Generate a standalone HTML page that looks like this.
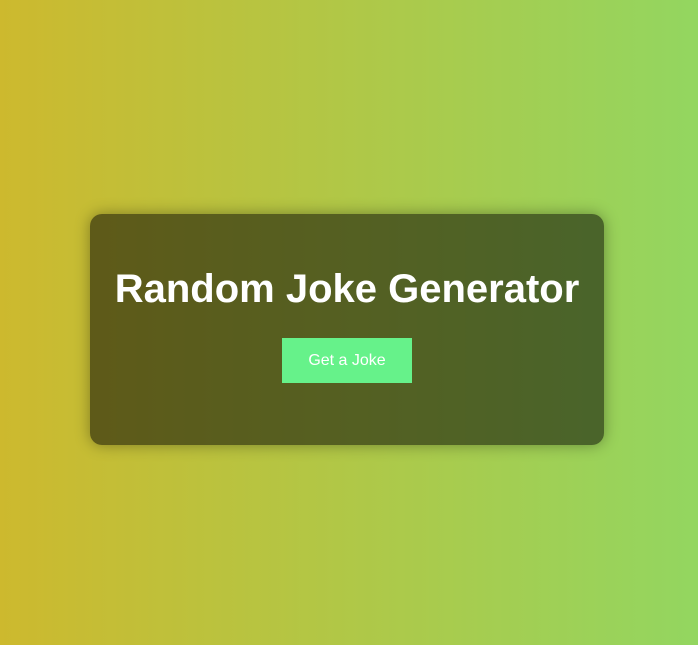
<!DOCTYPE html>
<html><head><style>
html,body{margin:0;height:100%;}
body{width:698px;height:645px;background:linear-gradient(to right,#cdb92e,#93d660);font-family:"Liberation Sans",Arial,sans-serif;position:relative;overflow:hidden;}
.card{position:absolute;left:90px;top:214px;width:514px;height:231px;background:rgba(0,0,0,0.52);border-radius:12px;box-shadow:0 0 15px rgba(0,0,0,0.35);text-align:center;}
h1{margin:0;position:absolute;top:52px;left:0;right:0;color:#fff;font-size:40px;font-weight:bold;line-height:46px;}
.btn{position:absolute;left:192px;top:124px;width:130px;height:45px;background:#66f28a;color:#fff;font-size:16px;line-height:45px;}
</style></head><body>
<div class="card"><h1>Random Joke Generator</h1><div class="btn">Get a Joke</div></div>
</body></html>
